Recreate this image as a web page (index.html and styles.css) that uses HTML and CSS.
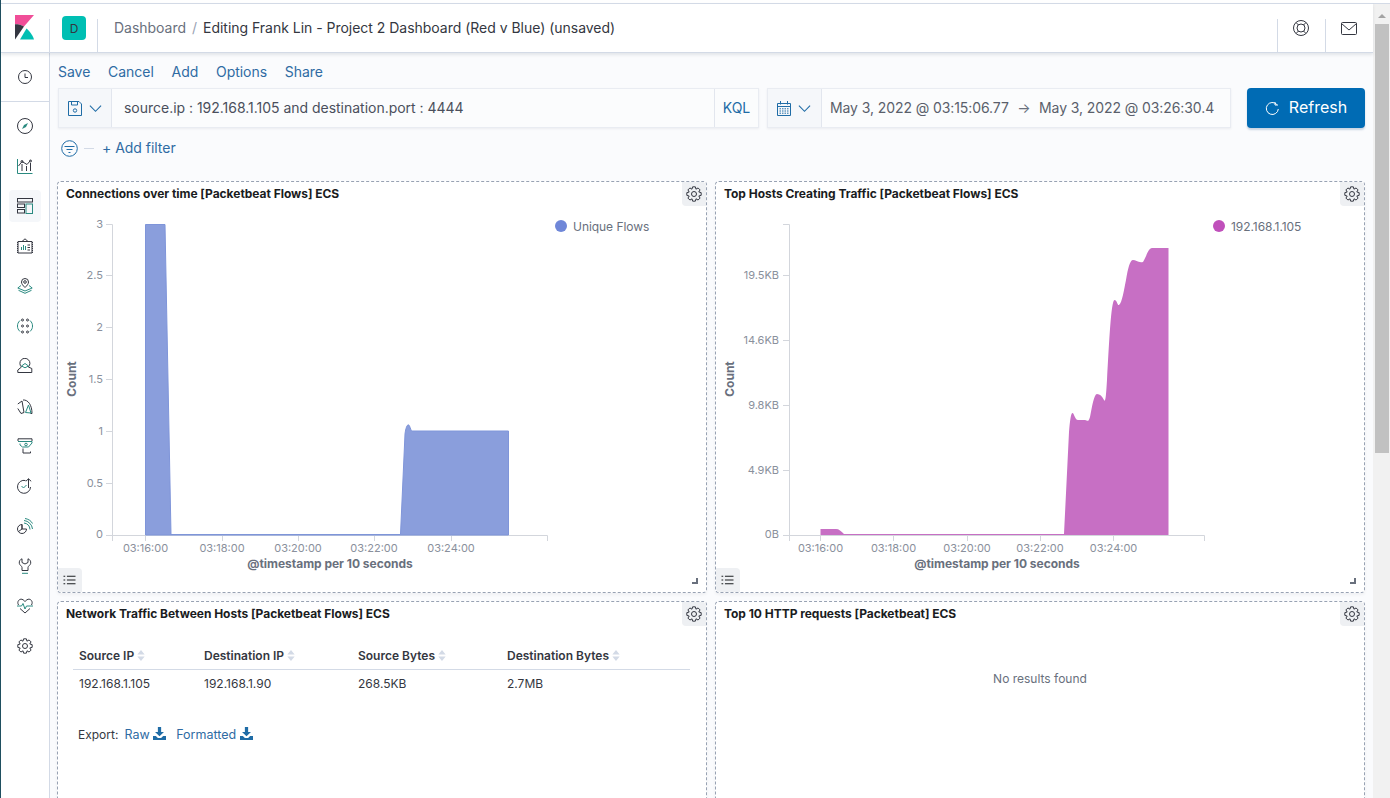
FILE: index.html
```html
<!DOCTYPE html>
<html lang="en">
<head>
  <meta charset="UTF-8" />
  <title>Editing Frank Lin - Project 2 Dashboard (Red v Blue) - Kibana</title>
  <link rel="stylesheet" href="styles.css">
</head>
<body>
  <svg class="defs" width="0" height="0">
    <symbol id="gear" viewBox="0 0 16 16">
      <polygon points="6.6,.83 9.4,.83 9.95,3.18 12.08,1.94 14.06,3.92 12.79,5.97 15.17,6.6 15.17,9.4 12.82,9.95 14.06,12.08 12.08,14.06 10.03,12.79 9.4,15.17 6.6,15.17 6.05,12.82 3.92,14.06 1.94,12.08 3.21,10.03 .83,9.4 .83,6.6 3.18,6.05 1.94,3.92 3.92,1.94 5.97,3.21" fill="none" stroke="currentColor" stroke-linejoin="round"/>
      <circle cx="8" cy="8" r="2.5" fill="none" stroke="currentColor"/>
    </symbol>
    <symbol id="list" viewBox="0 0 14 14">
      <path d="M4 2.5h10M4 7h10M4 11.5h10M0 2.5h2M0 7h2M0 11.5h2" fill="none" stroke="currentColor" stroke-width="1.2"/>
    </symbol>
    <symbol id="download" viewBox="0 0 16 16">
      <path d="M6 0h4v6h3.5L8 11.5 2.500 6H6zM0 11h3.500l2.500 2.500h4l2.500-2.500H16v5H0z" fill="currentColor"/>
    </symbol>
    <symbol id="sort" viewBox="0 0 8 12">
      <path d="M4 0l4 5H0zM4 12l4-5H0z" fill="currentColor"/>
    </symbol>
    <symbol id="chevron" viewBox="0 0 14 14">
      <path d="M1 4l6 6 6-6" fill="none" stroke="currentColor" stroke-width="1.2"/>
    </symbol>
  </svg>

  <div class="app">
    <header class="topbar">
      <a class="logo-cell">
        <svg width="20" height="25" viewBox="0 0 20 25">
          <path d="M0 0h19L9 11.500C6 9.800 3 9.200 0 9.300z" fill="#f04e98"/>
          <path d="M0 9.300c3-.1 6 .5 9 2.200L0 24.500z" fill="#343741"/>
          <path d="M5 24.500L11.500 13.500c3 2.500 6.500 7 7.500 11z" fill="#00bfb3"/>
        </svg>
      </a>
      <span class="divider"></span>
      <div class="badge-cell"><span class="space-badge">D</span></div>
      <span class="divider"></span>
      <nav class="crumbs">
        <span class="crumb-link">Dashboard</span>
        <span class="crumb-sep">/</span>
        <span class="crumb-current">Editing Frank Lin - Project 2 Dashboard (Red v Blue) (unsaved)</span>
      </nav>
      <span class="divider"></span>
      <a class="head-icon">
        <svg width="16" height="16" viewBox="0 0 16 16" fill="none" stroke="#343741">
          <circle cx="8" cy="8" r="7.500"/><circle cx="8" cy="8" r="4"/>
          <path d="M3 2.500L5.500 5M13 2.500L10.500 5M3 13.500L5.500 11M13 13.500L10.500 11"/>
        </svg>
      </a>
      <span class="divider"></span>
      <a class="head-icon">
        <svg width="16" height="13" viewBox="0 0 16 13" fill="none" stroke="#343741">
          <rect x=".5" y=".5" width="15" height="12" rx="1"/><path d="M.5 1.500L8 8l7.500-6.500"/>
        </svg>
      </a>
    </header>

    <div class="body-row">
      <aside class="sidebar">
        <div class="recent">
          <svg class="nav-icon" viewBox="0 0 16 16"><circle class="k" cx="8" cy="8" r="6.500"/><path class="k" d="M8 4.500V8.500H11"/></svg>
        </div>
        <ul class="nav-list">
          <li class="nav-item">
            <svg class="nav-icon" viewBox="0 0 16 16"><circle class="k" cx="8" cy="8" r="7.500"/><polygon class="tf" points="11,5 9,9 5,11 7,7"/></svg>
          </li>
          <li class="nav-item">
            <svg class="nav-icon" viewBox="0 0 16 16"><path class="t" d="M.5 1v14.500h15"/><path class="k" d="M1.500 8L5 3.500l5 3 3.500-4M5 6v7M9.500 8v5M13.500 5v8"/><circle class="k" cx="5" cy="3.500" r="1"/><circle class="k" cx="13.500" cy="3" r="1"/></svg>
          </li>
          <li class="nav-item active">
            <svg class="nav-icon" viewBox="0 0 16 16"><rect class="k" x=".5" y=".5" width="15" height="3.500"/><rect class="k" x=".5" y="6" width="7" height="3.500"/><rect class="k" x=".5" y="11.500" width="7" height="3.500"/><rect class="t" x="9" y="6" width="6.500" height="9.500"/></svg>
          </li>
          <li class="nav-item">
            <svg class="nav-icon" viewBox="0 0 16 16"><path class="k" d="M5 3.500L8 .8l3 2.700M1 3.500h14v11.500H1z"/><path class="k" stroke-dasharray="1 1" d="M.5 4v11M15.500 4v11"/><path class="t" d="M4.500 12V9M6.500 12V7M8.500 12V8"/><path class="k" d="M10.500 7h2.500M10.500 9.500h2.500M10.500 12h2.500"/></svg>
          </li>
          <li class="nav-item">
            <svg class="nav-icon" viewBox="0 0 16 16"><path class="k" d="M8 9.500C6 7.500 4.500 6 4.500 4a3.500 3.500 0 0 1 7 0C11.500 6 10 7.500 8 9.500z"/><circle class="k" cx="8" cy="4" r="1.300"/><path class="t" d="M4 7.500L.8 10 8 13 15.200 10 12 7.500M1.500 12.300L8 15.300 14.500 12.300"/></svg>
          </li>
          <li class="nav-item">
            <svg class="nav-icon" viewBox="0 0 16 16"><path class="t" d="M3 2.500C1 4.500 .5 6 .5 8s.5 3.500 2.500 5.500M13 2.500c2 2 2.500 3.500 2.500 5.500s-.5 3.500-2.500 5.500"/><g class="k"><circle cx="5.500" cy="2" r="1"/><circle cx="10.500" cy="2" r="1"/><circle cx="5.500" cy="8" r="1"/><circle cx="10.500" cy="8" r="1"/><circle cx="5.500" cy="14" r="1"/><circle cx="10.500" cy="14" r="1"/></g></svg>
          </li>
          <li class="nav-item">
            <svg class="nav-icon" viewBox="0 0 16 16"><path class="k" d="M.8 14.500h14V10.500l-3.500-1.500A5 5 0 1 0 4.500 9L.8 12z"/><path class="t" d="M4.500 8L8 5.500 11.500 8 8 9.800z"/></svg>
          </li>
          <li class="nav-item">
            <svg class="nav-icon" viewBox="0 0 16 16"><path class="k" d="M.8 6L5 3l2 11.500-3 1-3.200-5M6 2c5-.5 9 5 9 13.500h-1.500"/><path class="t" d="M8.500 14.500L11.500 7l2.500 8z"/></svg>
          </li>
          <li class="nav-item">
            <svg class="nav-icon" viewBox="0 0 16 16"><path class="k" d="M1 3V.8h14V3M6 10.500v4.500h7.500v-1.500"/><path class="t" d="M1 3.500h14v1.500L11.500 9h-6L3 7 3 5.500"/><circle class="t" cx="9" cy="6.500" r="1.300"/></svg>
          </li>
          <li class="nav-item">
            <svg class="nav-icon" viewBox="0 0 16 16"><path class="k" d="M8.500 2.500A6.500 6.500 0 1 0 13.500 9M11.500 10V.8M8.800 3.300L11.500.8l2.700 2.500"/><path class="t" d="M4.500 8l2 2 3-3"/></svg>
          </li>
          <li class="nav-item">
            <svg class="nav-icon" viewBox="0 0 16 16"><path class="k" d="M5 6.500a4.500 4.500 0 1 0 4.500 4.500H5zM5 6.500V11L1.500 13.500"/><path class="t" d="M7 5a7 7 0 0 1 6 6.500M7 2.500A9.500 9.500 0 0 1 15.500 11M8 .5c3 .5 6 2 7.500 5"/></svg>
          </li>
          <li class="nav-item">
            <svg class="nav-icon" viewBox="0 0 16 16"><path class="k" d="M5 .8v3.700L8 6l3-1.500V.8c2 .7 3 2.500 2.700 4.500S11 8 11 9.500v3H5v-3C5 8 2.600 7.300 2.300 5.300S3 1.500 5 .8z"/><path class="t" d="M5 15.300h6"/></svg>
          </li>
          <li class="nav-item">
            <svg class="nav-icon" viewBox="0 0 16 16"><path class="k" d="M1.500 7C-.5 3.500 2.500.5 5 1.300 6.500 1.700 8 3.500 8 3.500S9.500 1.700 11 1.300C13.500.5 16.500 3.500 14.500 7M3 10.500L8 15l5-4.500"/><path class="t" d="M0 8h4.500L6 5.500 8 11l1.500-3H16"/></svg>
          </li>
          <li class="nav-item">
            <svg class="nav-icon gear-dark"><use href="#gear"/></svg>
          </li>
        </ul>
      </aside>

      <main class="content">
        <nav class="app-menu">
          <a>Save</a><a>Cancel</a><a>Add</a><a>Options</a><a>Share</a>
        </nav>

        <div class="query-row">
          <div class="field query-field">
            <div class="prepend save-query">
              <svg width="14" height="15" viewBox="0 0 14 15" fill="none" stroke="#1f6ca6"><path d="M.5.5h10.500l2.500 2.500v11.500H.5z"/><path d="M3.500.5v3.500h6V.5"/><circle cx="7" cy="9.500" r="1.700"/></svg>
              <svg class="chev"><use href="#chevron"/></svg>
            </div>
            <div class="query-text">source.ip : 192.168.1.105 and destination.port : 4444</div>
            <div class="kql">KQL</div>
          </div>
          <div class="field date-field">
            <div class="prepend date-icon">
              <svg width="14" height="15" viewBox="0 0 14 15" fill="none" stroke="#1f6ca6"><path d="M.5 2.500h13v12H.5zM3.500 0v3.500M10.500 0v3.500M.5 5.500h13"/><path stroke-dasharray="1.500 1" d="M2.500 7.800h9M2.500 10h9M2.500 12.200h9"/></svg>
              <svg class="chev"><use href="#chevron"/></svg>
            </div>
            <div class="date-text">
              <span>May 3, 2022 @ 03:15:06.77</span>
              <span class="arrow">&rarr;</span>
              <span>May 3, 2022 @ 03:26:30.4</span>
            </div>
          </div>
          <button class="refresh">
            <svg width="14" height="15" viewBox="0 0 14 15" fill="none" stroke="#fff"><path d="M11.800 3.500A6 6 0 1 0 13.300 8M10 1v3h3"/></svg>
            <span class="refresh-label">Refresh</span>
          </button>
        </div>

        <div class="filter-row">
          <svg width="17" height="17" viewBox="0 0 17 17" fill="none" stroke="#1f6ca6"><circle cx="8.500" cy="8.500" r="7.800"/><path d="M3.500 6.500h10M5.500 9.500h6M7.500 12.500h2"/></svg>
          <span class="filter-dash"></span>
          <a class="add-filter">+ Add filter</a>
        </div>

        <section class="dashboard">
          <article class="panel">
            <h3 class="panel-title">Connections over time [Packetbeat Flows] ECS</h3>
            <button class="gear-btn"><svg><use href="#gear"/></svg></button>
            <svg class="chart" viewBox="58 208 648 384" width="648" height="384">
              <path class="axis" d="M106 224.500h6.500V535M106 275.500h6M106 327.500h6M106 379.500h6M106 431.500h6M106 483.500h6M106 535.500H547.500V541M112.500 535v6M145.500 535v6M222.500 535v6M298.500 535v6M374.500 535v6M451.500 535v6"/>
              <g class="tick" text-anchor="end">
                <text x="103" y="228">3</text><text x="103" y="279">2.5</text><text x="103" y="331">2</text><text x="103" y="383">1.5</text><text x="103" y="435">1</text><text x="103" y="487">0.5</text><text x="103" y="538">0</text>
              </g>
              <g class="tick" text-anchor="middle">
                <text x="145.500" y="552">03:16:00</text><text x="222" y="552">03:18:00</text><text x="298" y="552">03:20:00</text><text x="374" y="552">03:22:00</text><text x="451" y="552">03:24:00</text>
              </g>
              <text class="axis-title" x="330" y="568" text-anchor="middle">@timestamp per 10 seconds</text>
              <text class="axis-title" transform="translate(76 379) rotate(-90)" text-anchor="middle">Count</text>
              <path class="area-blue" d="M145.500 535V224.500H165L171 534.500H400.500L405 434C406 426 408 423 409.500 426 410.500 428 411 431 412 431H508.500V535z"/>
              <circle cx="561" cy="226" r="6" fill="#6f87d8"/>
              <text class="legend" x="573" y="231">Unique Flows</text>
            </svg>
            <button class="list-btn"><svg><use href="#list"/></svg></button>
            <span class="resize"></span>
          </article>

          <article class="panel">
            <h3 class="panel-title">Top Hosts Creating Traffic [Packetbeat Flows] ECS</h3>
            <button class="gear-btn"><svg><use href="#gear"/></svg></button>
            <svg class="chart" viewBox="716 208 648 384" width="648" height="384">
              <path class="axis" d="M783 224.500h6.500V535M783 275.500h6M783 340.500h6M783 405.500h6M783 470.500h6M783 535.500H1204.500V541M789.500 535v6M820.500 535v6M893.500 535v6M967.500 535v6M1040.500 535v6M1113.500 535v6"/>
              <g class="tick" text-anchor="end">
                <text x="779" y="279">19.5KB</text><text x="779" y="344">14.6KB</text><text x="779" y="409">9.8KB</text><text x="779" y="474">4.9KB</text><text x="779" y="538">0B</text>
              </g>
              <g class="tick" text-anchor="middle">
                <text x="820.500" y="552">03:16:00</text><text x="893.500" y="552">03:18:00</text><text x="967" y="552">03:20:00</text><text x="1040" y="552">03:22:00</text><text x="1113.500" y="552">03:24:00</text>
              </g>
              <text class="axis-title" x="997" y="568" text-anchor="middle">@timestamp per 10 seconds</text>
              <text class="axis-title" transform="translate(734 379) rotate(-90)" text-anchor="middle">Count</text>
              <path class="area-pink" d="M820.500 535V529H836C839 529 841 531 844 534H1064L1069 432C1070 420 1071 413 1072.500 413 1074 413 1075 420 1078 420H1085C1088 421 1088.500 422 1090 417 1092 407 1094 394 1097 394 1100 394 1102 396 1104 400 1105.500 403 1106 396 1107 380 1109 345 1111 300 1114.500 300 1117 300 1117.500 306 1119 305 1122 303 1124 290 1126 280 1128 268 1130 260 1133 260 1136 260 1138 263 1143 262 1146 258 1148 248 1152 248H1168.500V535z"/>
              <circle cx="1219" cy="226" r="6" fill="#c050bb"/>
              <text class="legend" x="1231" y="231">192.168.1.105</text>
            </svg>
            <button class="list-btn"><svg><use href="#list"/></svg></button>
            <span class="resize"></span>
          </article>

          <article class="panel">
            <h3 class="panel-title">Network Traffic Between Hosts [Packetbeat Flows] ECS</h3>
            <button class="gear-btn"><svg><use href="#gear"/></svg></button>
            <table class="flow-table">
              <thead>
                <tr>
                  <th class="col-a">Source IP <svg class="sort"><use href="#sort"/></svg></th>
                  <th class="col-b">Destination IP <svg class="sort"><use href="#sort"/></svg></th>
                  <th class="col-c">Source Bytes <svg class="sort"><use href="#sort"/></svg></th>
                  <th>Destination Bytes <svg class="sort"><use href="#sort"/></svg></th>
                </tr>
              </thead>
              <tbody>
                <tr><td>192.168.1.105</td><td>192.168.1.90</td><td>268.5KB</td><td>2.7MB</td></tr>
              </tbody>
            </table>
            <div class="export">
              <span class="export-label">Export:</span>
              <a>Raw <svg class="dl"><use href="#download"/></svg></a>
              <a>Formatted <svg class="dl"><use href="#download"/></svg></a>
            </div>
          </article>

          <article class="panel">
            <h3 class="panel-title">Top 10 HTTP requests [Packetbeat] ECS</h3>
            <button class="gear-btn"><svg><use href="#gear"/></svg></button>
            <p class="no-results">No results found</p>
          </article>
        </section>
      </main>
    </div>
  </div>

  <div class="scrollbar">
    <span class="scroll-up"></span>
    <span class="scroll-thumb"></span>
  </div>
</body>
</html>
```

FILE: styles.css
```css
* {
  box-sizing: border-box;
}
html, body {
  height: 100%;
}
body {
  margin: 0;
  height: 798px;
  display: flex;
  overflow: hidden;
  font-family: Inter, "Noto Sans", sans-serif;
  font-size: 14px;
  color: #343741;
  background: #fff;
}
.defs {
  position: absolute;
}
a {
  color: #2f6ba3;
}

/* page frame */
.app {
  flex: 1;
  min-width: 0;
  display: flex;
  flex-direction: column;
  border-left: 1px solid #1f4f60;
  padding-top: 3px;
}
.scrollbar {
  width: 17px;
  flex: none;
  display: flex;
  flex-direction: column;
  align-items: center;
  padding-top: 4px;
  background: #f1f1f1;
  border-top: 1px solid #d3dae6;
  margin-top: 3px;
}
.scroll-up {
  width: 0;
  height: 0;
  margin-top: 6px;
  border: 4px solid transparent;
  border-top: 0;
  border-bottom-color: #a3a3a3;
}
.scroll-thumb {
  width: 14px;
  height: 429px;
  margin-top: 6px;
  margin-left: 1px;
  background: #c1c1c1;
}

/* header */
.topbar {
  height: 50px;
  flex: none;
  display: flex;
  align-items: center;
  background: #fff;
  border-top: 1px solid #d3dae6;
  border-bottom: 1px solid #d3dae6;
  box-shadow: 0 2px 3px rgba(60, 70, 90, 0.12);
  position: relative;
  z-index: 2;
}
.logo-cell {
  width: 48px;
  height: 100%;
  display: flex;
  align-items: center;
  justify-content: center;
  padding-bottom: 2px;
}
.divider {
  width: 1px;
  height: 33px;
  align-self: flex-end;
  background: #d3dae6;
  flex: none;
}
.badge-cell {
  padding: 0 11px 0 12px;
}
.space-badge {
  display: flex;
  width: 24px;
  height: 24px;
  align-items: center;
  justify-content: center;
  border-radius: 4px;
  background: #00bfb3;
  font-size: 12px;
}
.crumbs {
  flex: 1;
  display: flex;
  align-items: center;
  padding: 0 0 2px 16px;
}
.crumb-link {
  color: #69707d;
  letter-spacing: -0.03px;
}
.crumb-sep {
  margin: 0 6px;
  color: #98a2b3;
}
.crumb-current {
  letter-spacing: -0.02px;
}
.head-icon {
  width: 47px;
  height: 100%;
  display: flex;
  align-items: center;
  justify-content: center;
  padding-right: 2px;
}

/* sidebar */
.body-row {
  flex: 1;
  min-height: 0;
  display: flex;
}
.sidebar {
  width: 49px;
  flex: none;
  background: #fff;
  border-right: 1px solid #d3dae6;
}
.recent {
  height: 49px;
  display: flex;
  align-items: center;
  justify-content: center;
  border-bottom: 1px solid #d3dae6;
}
.nav-list {
  list-style: none;
  margin: 0;
  padding: 4px 0 0;
}
.nav-item {
  height: 40px;
  display: flex;
  align-items: center;
  justify-content: center;
}
.nav-item.active {
  background: #f5f7fa;
  border-radius: 4px;
  width: 32px;
  height: 32px;
  margin: 4px 8px;
}
.nav-icon {
  width: 16px;
  height: 16px;
  fill: none;
}
.gear-dark {
  color: #343741;
}
.k {
  fill: none;
  stroke: #343741;
}
.t {
  fill: none;
  stroke: #2a8a80;
}
.tf {
  fill: #2a8a80;
}

/* main column */
.content {
  flex: 1;
  min-width: 0;
  padding: 9px 8px 0;
  background: #fafbfd;
  overflow: hidden;
}
.app-menu {
  height: 20px;
  display: flex;
  gap: 17.75px;
  align-items: center;
  margin-bottom: 6px;
  padding-bottom: 2px;
  letter-spacing: -0.03px;
}
.query-row {
  display: flex;
  gap: 8px;
  height: 40px;
}
.field {
  display: flex;
  align-items: stretch;
  background: #fbfcfd;
  border: 1px solid #e9ecf2;
  box-shadow: 0 1px 2px rgba(60, 70, 90, 0.08);
}
.query-field {
  width: 701px;
}
.date-field {
  width: 464px;
}
.prepend {
  display: flex;
  align-items: center;
  gap: 7px;
  padding-left: 9px;
  background: #f5f7fa;
  border-right: 1px solid #e2e6ee;
  width: 53px;
  flex: none;
}
.date-icon {
  width: 54px;
}
.chev {
  width: 13px;
  height: 13px;
  color: #1f6ca6;
}
.query-text {
  flex: 1;
  display: flex;
  align-items: center;
  padding: 0 0 2px 12px;
  color: #4a4f5c;
  letter-spacing: -0.02px;
}
.kql {
  width: 44px;
  display: flex;
  align-items: center;
  justify-content: center;
  padding-bottom: 2px;
  border-left: 1px solid #e2e6ee;
  color: #1f6ca6;
}
.date-text {
  flex: 1;
  display: flex;
  align-items: center;
  gap: 8.5px;
  padding: 0 0 2px 8px;
  color: #5a5f6b;
  letter-spacing: -0.09px;
}
.arrow {
  margin: 0;
  color: #69707d;
}
.refresh {
  width: 118px;
  margin-left: 8px;
  display: flex;
  align-items: center;
  justify-content: center;
  gap: 10px;
  border: 0;
  border-radius: 4px;
  background: #006bb4;
  color: #fff;
  font: 400 16px Inter, sans-serif;
  box-shadow: 0 2px 2px rgba(0, 60, 120, 0.2);
}
.refresh-label {
  padding-bottom: 2px;
}
.filter-row {
  height: 40px;
  display: flex;
  align-items: center;
  padding-left: 3px;
  margin-bottom: 13px;
}
.filter-dash {
  width: 10px;
  height: 1px;
  margin: 0 8px 0 6px;
  background: #d3dae6;
}
.add-filter {
  padding-bottom: 2px;
  letter-spacing: -0.03px;
}

/* panels */
.dashboard {
  display: grid;
  grid-template-columns: 650px 650px;
  grid-template-rows: 412px 412px;
  gap: 8px;
  margin-left: -1px;
}
.panel {
  position: relative;
  background: #fff;
  border: 1px dashed #98a2b3;
  border-radius: 4px;
  box-shadow: 0 2px 3px rgba(60, 70, 90, 0.06);
}
.panel-title {
  margin: 0;
  height: 26px;
  padding: 4px 8px 0;
  font-size: 12px;
  font-weight: 700;
  line-height: 16px;
  letter-spacing: -0.03px;
  color: #1a1c21;
}
.gear-btn {
  position: absolute;
  top: 0;
  right: 0;
  width: 24px;
  height: 24px;
  padding: 4px;
  border: 0;
  border-radius: 0 4px 0 4px;
  background: #eef0f3;
  color: #343741;
}
.gear-btn svg {
  display: block;
  width: 16px;
  height: 16px;
}
.list-btn {
  position: absolute;
  left: 0;
  bottom: 0;
  width: 24px;
  height: 24px;
  padding: 6px 5px;
  border: 0;
  border-radius: 0 4px 0 4px;
  background: #eef0f3;
  color: #1a1c21;
}
.list-btn svg {
  display: block;
  width: 13px;
  height: 12px;
}
.resize {
  position: absolute;
  right: 8px;
  bottom: 8px;
  width: 6px;
  height: 6px;
  border-right: 2px solid #69707d;
  border-bottom: 2px solid #69707d;
}
.chart {
  display: block;
}
.axis {
  fill: none;
  stroke: #d3d6dc;
}
.tick {
  font-size: 11px;
  fill: #8a909c;
}
.axis-title {
  font-size: 12px;
  font-weight: 700;
  letter-spacing: -0.02px;
  fill: #69707d;
}
.legend {
  font-size: 12px;
  letter-spacing: -0.05px;
  fill: #69707d;
}
.area-blue {
  fill: #8a9edc;
  stroke: #7f95d9;
}
.area-pink {
  fill: #c76fc4;
}

/* table panel */
.flow-table {
  width: 617px;
  margin: 13px 0 0 15px;
  border-collapse: collapse;
  font-size: 12px;
}
.flow-table th {
  height: 28px;
  padding: 1px 6px 0;
  text-align: left;
  font-weight: 600;
  border-bottom: 1px solid #d3dae6;
}
.flow-table td {
  height: 29px;
  padding: 0 6px;
}
.col-a {
  width: 125px;
}
.col-b {
  width: 154px;
}
.col-c {
  width: 149px;
}
.sort {
  width: 8px;
  height: 11px;
  color: #d3dae6;
  vertical-align: -1px;
}
.export {
  display: flex;
  align-items: center;
  margin: 29px 0 0 20px;
  font-size: 12px;
}
.export-label {
  margin-right: 6px;
}
.export a {
  margin-right: 10px;
  font-size: 12.5px;
}
.dl {
  width: 13px;
  height: 13px;
  color: #1f6ca6;
  vertical-align: -1px;
}
.no-results {
  margin: 43px 0 0;
  text-align: center;
  font-size: 12px;
  line-height: 16px;
  color: #69707d;
}
```
